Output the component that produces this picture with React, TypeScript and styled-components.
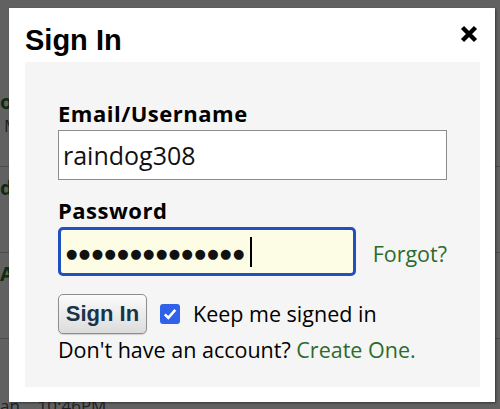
import React from "react";
import styled, { createGlobalStyle } from "styled-components";

const Global = createGlobalStyle`
  html, body { margin: 0; padding: 0; }
  body {
    width: 500px;
    height: 409px;
    overflow: hidden;
    font-family: "Open Sans", "DejaVu Sans", sans-serif;
    background: #fff;
  }
`;

const Page = styled.div`
  position: relative;
  width: 500px;
  height: 409px;
  overflow: hidden;
  background: #fff;
`;

const List = styled.div`
  display: flex;
  flex-direction: column;
  padding-top: 81px;
`;

const Row = styled.div`
  height: 86px;
  box-sizing: border-box;
  border-bottom: 1px solid #c8c8c8;
  padding-top: 8px;
  display: flex;
  flex-direction: column;
`;

const RowTitle = styled.div`
  font: bold 20px/26px "Open Sans", sans-serif;
  color: #2d6e2d;
  white-space: nowrap;
`;

const RowMeta = styled.div<{ $indent?: number }>`
  margin-left: ${(p) => p.$indent ?? 0}px;
  font: 17px/22px "Open Sans", sans-serif;
  color: #555;
  white-space: nowrap;
`;

const Overlay = styled.div`
  position: absolute;
  inset: 0;
  background: rgba(0, 0, 0, 0.62);
`;

const Dialog = styled.div`
  position: absolute;
  left: 9px;
  top: 8px;
  width: 486px;
  background: #fff;
  box-shadow: 1px 1px 2px rgba(0, 0, 0, 0.45);
  display: flex;
  flex-direction: column;
  padding: 15px 15px 15px 16px;
  box-sizing: border-box;
`;

const Header = styled.div`
  display: flex;
  justify-content: space-between;
  align-items: flex-start;
`;

const Title = styled.h1`
  margin: 0;
  font: bold 29px/34px "Liberation Sans", Arial, sans-serif;
  color: #000;
`;

const Close = styled.button`
  margin: 2px 2px 0 0;
  padding: 0;
  border: 0;
  background: none;
  width: 18px;
  height: 18px;
  display: flex;
  cursor: pointer;
`;

const Panel = styled.div`
  margin-top: 5px;
  background: #f5f5f5;
  padding: 38px 33px 24px 33px;
  display: flex;
  flex-direction: column;
`;

const Label = styled.label<{ $gap?: number }>`
  display: block;
  margin-top: ${(p) => p.$gap ?? 0}px;
  margin-bottom: 4px;
  font: bold 22px/26px "Open Sans", sans-serif;
  letter-spacing: 0.5px;
  color: #000;
`;

const TextInput = styled.div`
  box-sizing: border-box;
  width: 389px;
  height: 50px;
  border: 1px solid #8c8c8c;
  background: #fff;
  padding: 0 0 0 4px;
  display: flex;
  align-items: center;
  font: 25px "Open Sans", sans-serif;
  color: #111;
`;

const PasswordRow = styled.div`
  display: flex;
  align-items: center;
  gap: 17px;
`;

const PasswordField = styled.div`
  box-sizing: border-box;
  width: 299px;
  height: 49px;
  border: 3px solid #1f4fc1;
  border-radius: 5px;
  background: #fdfde6;
  padding: 4px 0 0 5px;
  display: flex;
  align-items: center;
`;

const Dots = styled.span`
  font: 13px "DejaVu Sans", sans-serif;
  letter-spacing: 1.5px;
  color: #111;
`;

const Caret = styled.span`
  width: 2px;
  height: 30px;
  background: #000;
  margin-left: 4px;
  margin-top: -4px;
`;

const Link = styled.a`
  font: 21.5px/26px "Open Sans", sans-serif;
  color: #2c6b2c;
  text-decoration: none;
  padding-top: 4px;
`;

const ActionRow = styled.div`
  margin-top: 18px;
  display: flex;
  align-items: center;
`;

const Button = styled.button`
  box-sizing: border-box;
  width: 89px;
  height: 40px;
  border: 1px solid #8e8e8e;
  border-radius: 5px;
  background: linear-gradient(#fbfbfb, #dcdcdc);
  box-shadow: 0 1px 1px rgba(0, 0, 0, 0.15);
  font: bold 22px "Liberation Sans", Arial, sans-serif;
  color: #17344a;
  padding: 0;
`;

const Check = styled.span`
  margin-left: 13px;
  width: 20px;
  height: 20px;
  border-radius: 3px;
  background: #2f62e8;
  display: flex;
  align-items: center;
  justify-content: center;
`;

const CheckLabel = styled.span`
  margin-left: 13px;
  font: 21.5px/26px "Open Sans", sans-serif;
  color: #000;
`;

const Footer = styled.p`
  margin: 3px 0 0 0;
  font: 21.5px/26px "Open Sans", sans-serif;
  color: #000;
`;

export default function App() {
  return (
    <>
      <Global />
      <Page>
        <List>
          <Row>
            <RowTitle>od</RowTitle>
            <RowMeta $indent={4}>Mon</RowMeta>
          </Row>
          <Row>
            <RowTitle>d</RowTitle>
          </Row>
          <Row>
            <RowTitle>Art</RowTitle>
          </Row>
          <Row>
            <RowTitle>&nbsp;</RowTitle>
            <RowMeta>&nbsp;</RowMeta>
            <RowMeta>an&nbsp;&nbsp;&nbsp;&nbsp;10:46PM</RowMeta>
          </Row>
        </List>
        <Overlay />
        <Dialog>
          <Header>
            <Title>Sign In</Title>
            <Close aria-label="Close">
              <svg width="18" height="18" viewBox="0 0 18 18">
                <path
                  d="M2.5 2.5 L15.5 15.5 M15.5 2.5 L2.5 15.5"
                  stroke="#000"
                  strokeWidth="4.4"
                  strokeLinecap="butt"
                />
              </svg>
            </Close>
          </Header>
          <Panel>
            <Label>Email/Username</Label>
            <TextInput>raindog308</TextInput>
            <Label $gap={17}>Password</Label>
            <PasswordRow>
              <PasswordField>
                <Dots>●●●●●●●●●●●●●●</Dots>
                <Caret />
              </PasswordField>
              <Link href="#">Forgot?</Link>
            </PasswordRow>
            <ActionRow>
              <Button>Sign In</Button>
              <Check>
                <svg width="14" height="12" viewBox="0 0 14 12">
                  <path
                    d="M1.8 6.4 L5.3 9.8 L12.3 1.8"
                    fill="none"
                    stroke="#fff"
                    strokeWidth="2.6"
                  />
                </svg>
              </Check>
              <CheckLabel>Keep me signed in</CheckLabel>
            </ActionRow>
            <Footer>
              Don't have an account? <Link href="#">Create One.</Link>
            </Footer>
          </Panel>
        </Dialog>
      </Page>
    </>
  );
}
